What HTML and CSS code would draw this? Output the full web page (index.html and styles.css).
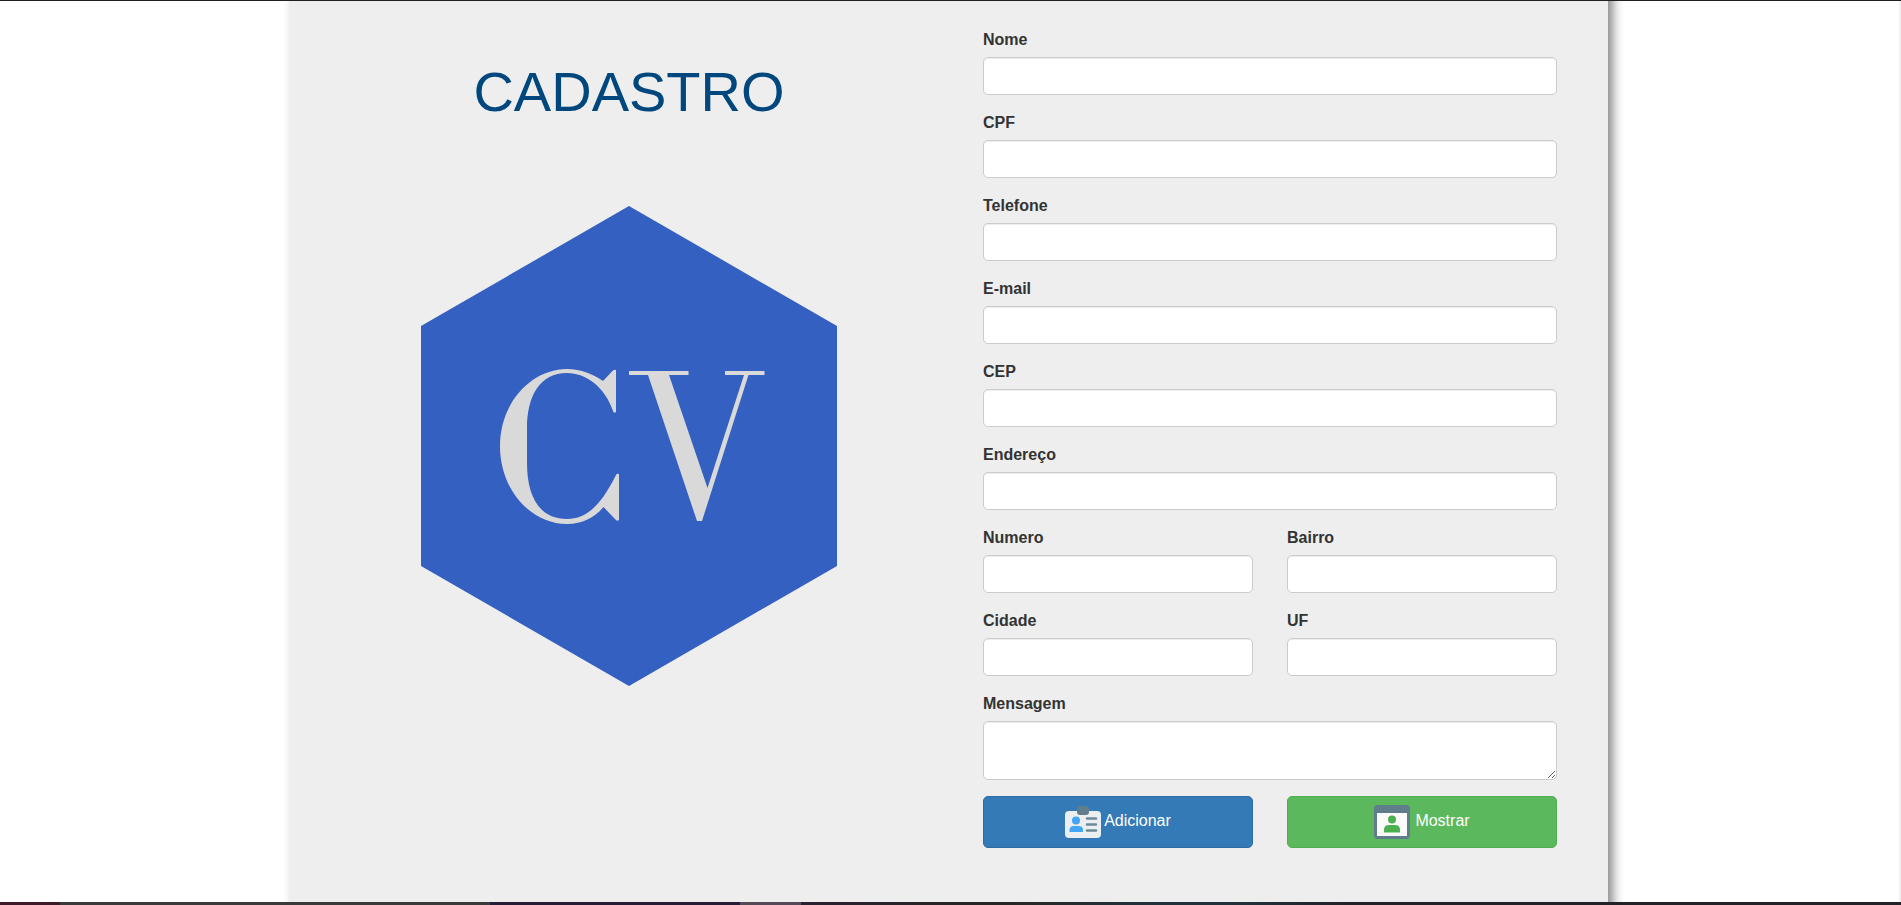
FILE: index.html
```html
<!DOCTYPE html>
<html lang="pt-BR">
<head>
<meta charset="utf-8">
<title>Cadastro</title>
<link rel="stylesheet" href="styles.css">
</head>
<body>
<div class="page">
<main class="panel">
  <section class="brand">
    <h1 class="title">CADASTRO</h1>
    <svg class="logo" viewBox="0 0 416 480" role="img" aria-label="CV">
      <polygon points="208,0 416,120 416,360 208,480 0,360 0,120" fill="#3460c1"/>
      <g fill="#d9d9d9">
        <path d="M182 175L190.500 166Q193 163 195 164V206Q193 208 192 205C184 181 165 167 146 167C119 167 106 190 106 222V257C106 290 118 313 146 313C166 313 180 299 195 269Q196 267 198 268V314Q196 316 194 313L182.500 301C174 311 162 318 146 318C110 318 79 284 79 240C79 196 111 163 146 163C160 163 172 168 182 175Z"/>
        <path d="M208 165H267.500V169H248L286.500 282L323 169H304V165H343.500V169H327.500L281 315H276L227 169H208Z"/>
      </g>
    </svg>
  </section>
  <form class="form">
    <div class="field wide"><label for="nome">Nome</label><input id="nome" type="text"></div>
    <div class="field wide"><label for="cpf">CPF</label><input id="cpf" type="text"></div>
    <div class="field wide"><label for="telefone">Telefone</label><input id="telefone" type="tel"></div>
    <div class="field wide"><label for="email">E-mail</label><input id="email" type="email"></div>
    <div class="field wide"><label for="cep">CEP</label><input id="cep" type="text"></div>
    <div class="field wide"><label for="endereco">Endereço</label><input id="endereco" type="text"></div>
    <div class="field"><label for="numero">Numero</label><input id="numero" type="text"></div>
    <div class="field"><label for="bairro">Bairro</label><input id="bairro" type="text"></div>
    <div class="field"><label for="cidade">Cidade</label><input id="cidade" type="text"></div>
    <div class="field"><label for="uf">UF</label><input id="uf" type="text"></div>
    <div class="field wide"><label for="mensagem">Mensagem</label><textarea id="mensagem"></textarea></div>
    <button class="btn add" type="button">
      <svg class="icon" viewBox="0 0 36 36" aria-hidden="true">
        <rect x="0" y="7" width="36" height="27" rx="4" fill="#eceff1"/>
        <rect x="12" y="2" width="12" height="9" rx="3" fill="#607d8b"/>
        <circle cx="11" cy="16.500" r="4" fill="#42a5f5"/>
        <path d="M4.500 28V26Q4.500 22 9 22H13.500Q18 22 18 26V28Z" fill="#42a5f5"/>
        <path d="M22 14.500H31M22 20.500H31M22 26.500H31" stroke="#6b8a98" stroke-width="2.500" stroke-linecap="round"/>
      </svg>
      <span>Adicionar</span>
    </button>
    <button class="btn show" type="button">
      <svg class="icon" viewBox="0 0 36 36" aria-hidden="true">
        <rect x="0" y="1" width="36" height="34" rx="4" fill="#607d8b"/>
        <path d="M3 9H33V32H3Z" fill="#fafafa"/>
        <circle cx="18" cy="15.500" r="4" fill="#4caf50"/>
        <path d="M10 28.500V26Q10 21 15 21H21Q26 21 26 26V28.500Z" fill="#4caf50"/>
      </svg>
      <span>Mostrar</span>
    </button>
  </form>
</main>
</div>
<footer class="strip"></footer>
</body>
</html>
```
FILE: styles.css
```css
* {
  box-sizing: border-box;
}

body {
  margin: 0;
  min-height: 100vh;
  display: flex;
  flex-direction: column;
  border-top: 1px solid #231f20;
  background: #fff;
  color: #333;
  font: 16px/23px "Liberation Sans", Arial, sans-serif;
}

.page {
  flex: 1;
  display: flex;
  overflow: hidden;
  padding-right: 1px;
  border-right: 2px solid #f1f1f1;
}

/* The panel runs past the page's top and bottom so its side shadows stay even. */
.panel {
  width: 100%;
  max-width: 1318px;
  margin: -20px auto;
  padding: 20px 51px 20px 0;
  display: grid;
  grid-template-columns: 678fr 574fr;
  column-gap: 15px;
  background: #eee;
  box-shadow: 5px 0 10px #888;
}

.brand {
  display: flex;
  flex-direction: column;
  align-items: center;
  padding-top: 60px;
}

.title {
  margin: 0 0 83px;
  color: #00477d;
  font-size: 56px;
  font-weight: 400;
  line-height: 62px;
}

.logo {
  display: block;
  width: 416px;
  max-width: 90%;
}

.form {
  display: grid;
  grid-template-columns: 1fr 1fr;
  align-content: start;
  gap: 16px 34px;
  padding-top: 27px;
}

.field {
  display: flex;
  flex-direction: column;
  gap: 6px;
}

.wide {
  grid-column: 1 / -1;
}

.field label {
  font-weight: 700;
}

.field input,
.field textarea {
  width: 100%;
  height: 38px;
  padding: 6px 12px;
  border: 1px solid #ccc;
  border-radius: 5px;
  background: #fff;
  box-shadow: inset 0 1px 1px rgba(0, 0, 0, 0.075);
  color: #555;
  font: inherit;
}

.field textarea {
  display: block;
  height: 59px;
  resize: vertical;
}

.btn {
  display: flex;
  align-items: center;
  justify-content: center;
  gap: 3px;
  height: 52px;
  padding: 0 12px 4px;
  border: 1px solid;
  border-radius: 5px;
  color: #fff;
  font: inherit;
  cursor: pointer;
}

.add {
  background: #337ab7;
  border-color: #2e6da4;
}

.show {
  gap: 5px;
  background: #5cb85c;
  border-color: #4cae4c;
}

.icon {
  width: 36px;
  height: 36px;
  margin-top: 4px;
}

.strip {
  height: 3px;
  background: linear-gradient(to right, #3d1a2a 60px, #3a3a3a 60px 490px, #271c35 490px 740px, #544a56 740px 801px, #2a2230 801px, #282624 1000px, #22323a 1150px 1230px, #232228 1350px);
}
```
